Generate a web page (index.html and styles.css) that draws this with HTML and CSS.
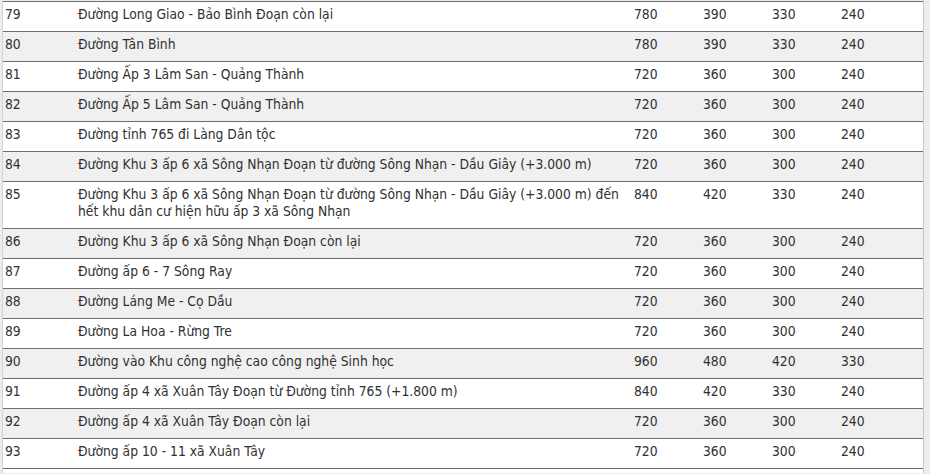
FILE: index.html
```html
<!DOCTYPE html>
<html lang="vi">
<head>
<meta charset="utf-8">
<link rel="stylesheet" href="styles.css">
</head>
<body>
<div class="frame">
<table class="price-table">
<colgroup><col class="c-no"><col class="c-name"><col class="c-v"><col class="c-v"><col class="c-v"><col class="c-last"></colgroup>
<tbody>
<tr><td class="no">79</td><td class="name">Đường Long Giao - Bảo Bình Đoạn còn lại</td><td>780</td><td>390</td><td>330</td><td>240</td></tr>
<tr><td class="no">80</td><td class="name">Đường Tân Bình</td><td>780</td><td>390</td><td>330</td><td>240</td></tr>
<tr><td class="no">81</td><td class="name">Đường Ấp 3 Lâm San - Quảng Thành</td><td>720</td><td>360</td><td>300</td><td>240</td></tr>
<tr><td class="no">82</td><td class="name">Đường Ấp 5 Lâm San - Quảng Thành</td><td>720</td><td>360</td><td>300</td><td>240</td></tr>
<tr><td class="no">83</td><td class="name">Đường tỉnh 765 đi Làng Dân tộc</td><td>720</td><td>360</td><td>300</td><td>240</td></tr>
<tr><td class="no">84</td><td class="name">Đường Khu 3 ấp 6 xã Sông Nhạn Đoạn từ đường Sông Nhạn - Dầu Giây (+3.000 m)</td><td>720</td><td>360</td><td>300</td><td>240</td></tr>
<tr><td class="no">85</td><td class="name">Đường Khu 3 ấp 6 xã Sông Nhạn Đoạn từ đường Sông Nhạn - Dầu Giây (+3.000 m) đến hết khu dân cư hiện hữu ấp 3 xã Sông Nhạn</td><td>840</td><td>420</td><td>330</td><td>240</td></tr>
<tr><td class="no">86</td><td class="name">Đường Khu 3 ấp 6 xã Sông Nhạn Đoạn còn lại</td><td>720</td><td>360</td><td>300</td><td>240</td></tr>
<tr><td class="no">87</td><td class="name">Đường ấp 6 - 7 Sông Ray</td><td>720</td><td>360</td><td>300</td><td>240</td></tr>
<tr><td class="no">88</td><td class="name">Đường Láng Me - Cọ Dầu</td><td>720</td><td>360</td><td>300</td><td>240</td></tr>
<tr><td class="no">89</td><td class="name">Đường La Hoa - Rừng Tre</td><td>720</td><td>360</td><td>300</td><td>240</td></tr>
<tr><td class="no">90</td><td class="name">Đường vào Khu công nghệ cao công nghệ Sinh học</td><td>960</td><td>480</td><td>420</td><td>330</td></tr>
<tr><td class="no">91</td><td class="name">Đường ấp 4 xã Xuân Tây Đoạn từ Đường tỉnh 765 (+1.800 m)</td><td>840</td><td>420</td><td>330</td><td>240</td></tr>
<tr><td class="no">92</td><td class="name">Đường ấp 4 xã Xuân Tây Đoạn còn lại</td><td>720</td><td>360</td><td>300</td><td>240</td></tr>
<tr><td class="no">93</td><td class="name">Đường ấp 10 - 11 xã Xuân Tây</td><td>720</td><td>360</td><td>300</td><td>240</td></tr>
</tbody>
</table>
</div>
</body>
</html>
```
FILE: styles.css
```css
html, body {
  margin: 0;
  padding: 0;
}
body {
  background: #ececec;
  width: 930px;
  height: 474px;
  overflow: hidden;
  font-family: "DejaVu Sans Condensed", "Liberation Sans", sans-serif;
  font-size: 13.75px;
  color: #303030;
}
.frame {
  margin-left: 2px;
  width: 920px;
  border-left: 1px solid #d4d4d4;
  border-right: 1px solid #c8c8c8;
  padding-top: 1px;
  padding-bottom: 4px;
  background: linear-gradient(#efefef 0 1px, #fff 1px);
}
.price-table {
  width: 920px;
  border-collapse: collapse;
  table-layout: fixed;
}
.c-no { width: 70px; }
.c-name { width: 557px; }
.c-v { width: 69px; }
.c-last { width: 86px; }
.price-table td {
  border-top: 1px solid #6e6e6e;
  border-bottom: 1px solid #6e6e6e;
  padding: 4px 4px 8px 4px;
  line-height: 17px;
  vertical-align: top;
}
.price-table td.no { padding-left: 2px; }
.price-table td.name { padding-left: 5px; }
.price-table tr:nth-child(even) td { background: #f0f0f0; }
.price-table tr:nth-child(odd) td { background: #fff; }
```
